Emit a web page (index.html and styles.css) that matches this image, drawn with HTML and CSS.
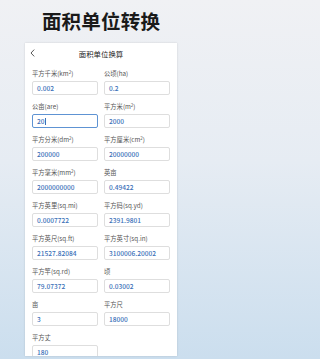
FILE: index.html
```html
<!DOCTYPE html>
<html lang="zh">
<head>
<meta charset="utf-8">
<title>面积单位转换</title>
<link rel="stylesheet" href="styles.css">
</head>
<body>
<div class="page">
  <h1 class="headline">面积单位转换</h1>
  <div class="card">
    <div class="bar">
      <span class="back"><svg width="5" height="8" viewBox="0 0 5 8"><path d="M4.2 0.6 L1 4 L4.2 7.4" fill="none" stroke="#444" stroke-width="0.9"/></svg></span>
      <span class="bar-title">面积单位换算</span>
    </div>
    <div class="grid">
      <div class="field"><div class="label">平方千米(km<sup>2</sup>)</div><div class="input">0.002</div></div>
      <div class="field"><div class="label">公顷(ha)</div><div class="input">0.2</div></div>
      <div class="field"><div class="label">公亩(are)</div><div class="input focused">20<span class="caret"></span></div></div>
      <div class="field"><div class="label">平方米(m<sup>2</sup>)</div><div class="input">2000</div></div>
      <div class="field"><div class="label">平方分米(dm<sup>2</sup>)</div><div class="input">200000</div></div>
      <div class="field"><div class="label">平方厘米(cm<sup>2</sup>)</div><div class="input">20000000</div></div>
      <div class="field"><div class="label">平方毫米(mm<sup>2</sup>)</div><div class="input">2000000000</div></div>
      <div class="field"><div class="label">英亩</div><div class="input">0.49422</div></div>
      <div class="field"><div class="label">平方英里(sq.mi)</div><div class="input">0.0007722</div></div>
      <div class="field"><div class="label">平方码(sq.yd)</div><div class="input">2391.9801</div></div>
      <div class="field"><div class="label">平方英尺(sq.ft)</div><div class="input">21527.82084</div></div>
      <div class="field"><div class="label">平方英寸(sq.in)</div><div class="input">3100006.20002</div></div>
      <div class="field"><div class="label">平方竿(sq.rd)</div><div class="input">79.07372</div></div>
      <div class="field"><div class="label">顷</div><div class="input">0.03002</div></div>
      <div class="field"><div class="label">亩</div><div class="input">3</div></div>
      <div class="field"><div class="label">平方尺</div><div class="input">18000</div></div>
      <div class="field"><div class="label">平方丈</div><div class="input">180</div></div>
    </div>
  </div>
</div>
</body>
</html>
```
FILE: styles.css
```css
html, body {
  margin: 0;
  padding: 0;
}
body {
  width: 202px;
  height: 359px;
  overflow: hidden;
  font-family: "Noto Sans CJK SC", "Noto Sans", Roboto, sans-serif;
  background: linear-gradient(180deg, #f0f1f4 0%, #e6ecf3 45%, #cbdeee 100%);
}
.page {
  display: flex;
  flex-direction: column;
  align-items: center;
}
.headline {
  margin: 9px 0 0 0;
  height: 34px;
  line-height: 24px;
  font-size: 19.5px;
  font-weight: 700;
  color: #1a1a1a;
  letter-spacing: 0.2px;
}
.card {
  width: 152px;
  height: 313px;
  overflow: hidden;
  background: #fff;
  box-shadow: 0 0 2px rgba(0, 0, 0, 0.14);
  box-sizing: border-box;
  padding: 0 7px;
}
.bar {
  height: 21px;
  display: flex;
  align-items: center;
  justify-content: center;
  position: relative;
}
.back {
  position: absolute;
  left: -2px;
  top: 6px;
  display: flex;
}
.bar-title {
  font-size: 7.4px;
  color: #222;
  line-height: 21px;
}
.grid {
  margin-top: 5px;
  display: grid;
  grid-template-columns: 66px 66px;
  column-gap: 6px;
  row-gap: 7px;
}
.field {
  display: flex;
  flex-direction: column;
  gap: 3px;
}
.label {
  font-size: 6.3px;
  line-height: 9px;
  color: #555;
  white-space: nowrap;
}
.label sup {
  font-size: 4.5px;
  line-height: 0;
  vertical-align: 2px;
}
.input {
  height: 14px;
  box-sizing: border-box;
  border: 1px solid #dedede;
  border-radius: 2px;
  padding-left: 4px;
  font-size: 6.6px;
  line-height: 8px;
  font-weight: 500;
  color: #3a70b8;
  display: flex;
  align-items: center;
}
.input.focused {
  border-color: #5e93d3;
}
.caret {
  width: 0.7px;
  height: 7px;
  background: #3a70b8;
  margin-left: 0.5px;
}
```
